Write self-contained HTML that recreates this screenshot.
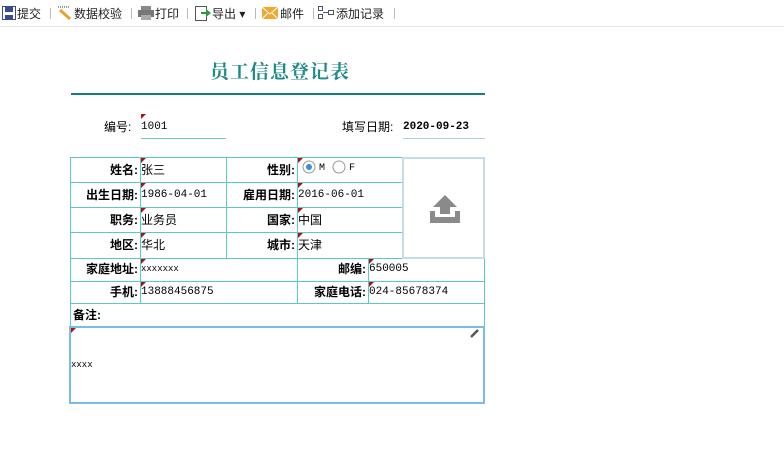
<!DOCTYPE html>
<html><head><meta charset="utf-8"><style>
*{margin:0;padding:0;box-sizing:border-box}
body{width:784px;height:458px;background:#fff;position:relative;overflow:hidden;font-family:"Liberation Sans","Noto Sans CJK SC",sans-serif;font-size:12px;color:#000}
.a{position:absolute}
.tb{top:0;left:0;width:784px;height:27px;background:#fff;border-bottom:1px solid #e8e8e8}
.tb span{position:absolute;top:5px;font-size:12px;color:#222}
.sep{position:absolute;top:8px;width:1px;height:11px;background:#bbb}
.l{font-weight:bold;text-align:right;font-size:12px;line-height:24px}
.v{font-family:"Liberation Mono","Noto Sans CJK SC",monospace;font-size:11px;line-height:24px}
.c{font-size:12px;line-height:24px}
.tri{position:absolute;width:0;height:0;border-top:5px solid #b01010;border-right:5px solid transparent}
.h{position:absolute;height:1px;background:#5cc8c8}
.vv{position:absolute;width:1px;background:#5cc8c8}
</style></head><body>
<div class="a tb">
<svg class="a" style="left:2px;top:6px" width="14" height="14"><rect x="0.5" y="0.5" width="13" height="13" fill="#fff" stroke="#3a4a8a"/><rect x="3" y="1" width="8" height="5" fill="#3a4a8a"/><rect x="3" y="9" width="8" height="4" fill="#3a4a8a"/></svg>
<span style="left:17px">提交</span><div class="sep" style="left:50px"></div>
<svg class="a" style="left:57px;top:5px" width="16" height="16"><line x1="1" y1="2" x2="13" y2="2" stroke="#333" stroke-dasharray="1,1"/><line x1="3" y1="5" x2="13" y2="14" stroke="#e8a030" stroke-width="3"/></svg>
<span style="left:74px">数据校验</span><div class="sep" style="left:131px"></div>
<svg class="a" style="left:138px;top:6px" width="16" height="14"><rect x="3" y="0" width="10" height="4" fill="#888"/><rect x="0" y="4" width="16" height="7" fill="#777"/><rect x="3" y="9" width="10" height="5" fill="#aaa"/></svg>
<span style="left:155px">打印</span><div class="sep" style="left:187px"></div>
<svg class="a" style="left:195px;top:5px" width="16" height="16"><rect x="0.5" y="1.5" width="11" height="14" fill="#fff" stroke="#555"/><path d="M6 7h5V4l5 4-5 4V9H6z" fill="#2a9a3a"/></svg>
<span style="left:212px">导出 ▾</span><div class="sep" style="left:255px"></div>
<svg class="a" style="left:262px;top:7px" width="16" height="12"><rect width="16" height="12" fill="#f0a830"/><path d="M0 0L8 7L16 0M0 12L6 6M16 12L10 6" stroke="#fff" fill="none"/></svg>
<span style="left:280px">邮件</span><div class="sep" style="left:313px"></div>
<svg class="a" style="left:318px;top:6px" width="16" height="14"><rect x="0.5" y="0.5" width="4" height="4" fill="none" stroke="#555"/><rect x="0.5" y="8.5" width="4" height="4" fill="none" stroke="#555"/><rect x="10.5" y="4.5" width="5" height="4" fill="none" stroke="#555"/><line x1="5" y1="6.5" x2="10" y2="6.5" stroke="#3060c0"/></svg>
<span style="left:336px">添加记录</span><div class="sep" style="left:394px"></div>
</div>

<div class="a" style="left:70px;width:420px;top:57px;text-align:center;font-family:'Liberation Serif','Noto Serif CJK SC',serif;font-weight:bold;font-size:19px;color:#1f8a8a;letter-spacing:1px">员工信息登记表</div>
<div class="a" style="left:71px;top:93px;width:414px;height:2px;background:#138080"></div>

<div class="a c" style="left:104px;top:115px">编号:</div>
<div class="tri" style="left:141px;top:114px"></div>
<div class="a v" style="left:141px;top:115px">1001</div>
<div class="a" style="left:141px;top:138px;width:85px;height:1px;background:#6cc8c8"></div>
<div class="a c" style="left:342px;top:115px">填写日期:</div>
<div class="a v" style="left:403px;top:115px;font-weight:bold">2020-09-23</div>
<div class="a" style="left:403px;top:138px;width:82px;height:1px;background:#a8d0e0"></div>

<!-- grid lines -->
<div class="h" style="left:70px;top:157px;width:332px"></div>
<div class="h" style="left:70px;top:182px;width:332px"></div>
<div class="h" style="left:70px;top:207px;width:332px"></div>
<div class="h" style="left:70px;top:232px;width:332px"></div>
<div class="h" style="left:70px;top:258px;width:415px"></div>
<div class="h" style="left:70px;top:281px;width:415px"></div>
<div class="h" style="left:70px;top:303px;width:415px"></div>
<div class="vv" style="left:70px;top:157px;height:170px"></div>
<div class="vv" style="left:140px;top:157px;height:146px"></div>
<div class="vv" style="left:226px;top:157px;height:101px"></div>
<div class="vv" style="left:297px;top:157px;height:146px"></div>
<div class="vv" style="left:368px;top:258px;height:45px"></div>
<div class="vv" style="left:484px;top:258px;height:69px"></div>
<div class="a" style="left:402px;top:157px;width:83px;height:102px;border:2px solid #c4dcea;background:#fff"></div>
<svg class="a" style="left:429px;top:193px" width="32" height="32"><path d="M16 2L4 14h7v7h10v-7h7z" fill="#8a8a8a"/><path d="M1 18h5v6h20v-6h5v12H1z" fill="#8a8a8a"/></svg>

<div class="a l" style="left:70px;width:68px;top:158px">姓名:</div>
<div class="a l" style="left:70px;width:68px;top:183px">出生日期:</div>
<div class="a l" style="left:70px;width:68px;top:208px">职务:</div>
<div class="a l" style="left:70px;width:68px;top:233px">地区:</div>
<div class="a l" style="left:226px;width:69px;top:158px">性别:</div>
<div class="a l" style="left:226px;width:69px;top:183px">雇用日期:</div>
<div class="a l" style="left:226px;width:69px;top:208px">国家:</div>
<div class="a l" style="left:226px;width:69px;top:233px">城市:</div>
<div class="tri" style="left:141px;top:158px"></div><div class="tri" style="left:141px;top:183px"></div><div class="tri" style="left:141px;top:208px"></div><div class="tri" style="left:141px;top:233px"></div>
<div class="tri" style="left:298px;top:158px"></div><div class="tri" style="left:298px;top:183px"></div><div class="tri" style="left:298px;top:208px"></div><div class="tri" style="left:298px;top:233px"></div>
<div class="a c" style="left:141px;top:158px">张三</div>
<div class="a v" style="left:141px;top:183px">1986-04-01</div>
<div class="a c" style="left:141px;top:208px">业务员</div>
<div class="a c" style="left:141px;top:233px">华北</div>
<svg class="a" style="left:302px;top:160px" width="60" height="14"><circle cx="7" cy="7" r="6" fill="#fff" stroke="#999"/><circle cx="7" cy="7" r="3" fill="#3a8ee0"/><text x="17" y="10" font-size="10" font-family="Liberation Mono">M</text><circle cx="37" cy="7" r="6" fill="#fff" stroke="#999"/><text x="47" y="10" font-size="10" font-family="Liberation Mono">F</text></svg>
<div class="a v" style="left:298px;top:183px">2016-06-01</div>
<div class="a c" style="left:298px;top:208px">中国</div>
<div class="a c" style="left:298px;top:233px">天津</div>

<div class="a l" style="left:70px;width:68px;top:258px;line-height:23px">家庭地址:</div>
<div class="tri" style="left:141px;top:259px"></div>
<div class="a v" style="left:141px;top:258px;line-height:23px;font-size:9px">xxxxxxx</div>
<div class="a l" style="left:297px;width:69px;top:258px;line-height:23px">邮编:</div>
<div class="tri" style="left:369px;top:259px"></div>
<div class="a v" style="left:369px;top:258px;line-height:23px">650005</div>
<div class="a l" style="left:70px;width:68px;top:281px;line-height:22px">手机:</div>
<div class="tri" style="left:141px;top:282px"></div>
<div class="a v" style="left:141px;top:281px;line-height:22px">13888456875</div>
<div class="a l" style="left:297px;width:69px;top:281px;line-height:22px">家庭电话:</div>
<div class="tri" style="left:369px;top:282px"></div>
<div class="a v" style="left:369px;top:281px;line-height:22px">024-85678374</div>
<div class="a l" style="left:73px;top:303px;line-height:24px;text-align:left">备注:</div>

<div class="a" style="left:69px;top:326px;width:416px;height:78px;border:2px solid #78bde8;background:#fff"></div>
<div class="tri" style="left:71px;top:328px"></div>
<svg class="a" style="left:470px;top:328px" width="10" height="10"><path d="M1 9L8 2" stroke="#555" stroke-width="2.5"/></svg>
<div class="a v" style="left:71px;top:359px;font-size:9px;line-height:12px">xxxx</div>
</body></html>
